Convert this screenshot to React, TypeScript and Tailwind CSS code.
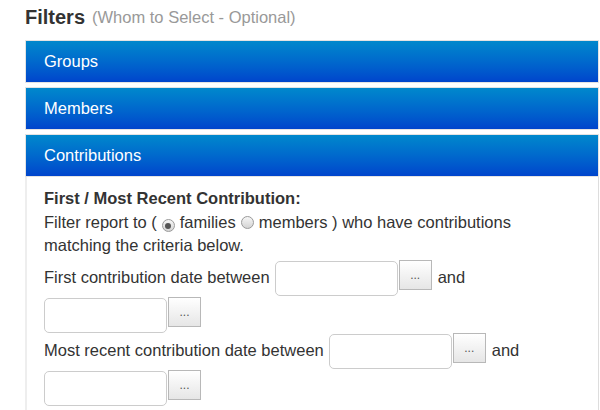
const Bar = ({ label }: { label: string }) => (
    <div className="h-[43px] mb-[4px] flex items-center pl-[18px] text-white text-[16.5px] bg-gradient-to-b from-[#0088cc] to-[#0044cc] border border-[#e3e3e3]">
        {label}
    </div>
)

const DateField = () => (
    <>
        <input type="text" className="w-[123px] h-[35px] bg-white border border-[#cccccc] rounded-[5px] outline-none" />
        <button className="w-[33px] h-[30px] -mt-[1px] ml-[1px] border border-[#b8b8b8] bg-gradient-to-b from-white to-[#e6e6e6] text-[#555] text-[12px] leading-none">...</button>
    </>
)

const Radio = ({ checked }: { checked?: boolean }) => (
    <span className="inline-flex items-center justify-center w-[13px] h-[13px] rounded-full border border-[#9a9a9a] bg-gradient-to-b from-[#f6f6f6] to-[#d4d4d4] mx-[5px] align-[-1px]">
        {checked && <span className="w-[6px] h-[6px] rounded-full bg-[#555]" />}
    </span>
)

export default function App() {
    return (
        <div className="font-['Liberation_Sans',Arial,sans-serif] text-[#333] w-[600px] h-[410px] overflow-hidden bg-white pl-[25px] pr-[1px]">
            <div className="h-[40px] flex items-center pb-[6px]">
                <span className="text-[20px] font-bold text-[#333]">Filters</span>
                <span className="text-[16.5px] text-[#999] ml-[7px] mt-[1px]">(Whom to Select - Optional)</span>
            </div>
            <Bar label="Groups" />
            <Bar label="Members" />
            <div className="h-[43px] flex items-center pl-[18px] text-white text-[16.5px] bg-gradient-to-b from-[#0088cc] to-[#0044cc] border border-[#e3e3e3]">
                Contributions
            </div>
            <div className="border-l-2 border-l-[#eeeeee] border-r border-r-[#dddddd] pl-[17px] pt-[10px] h-[300px] text-[16.5px] leading-[23.5px]">
                <div className="font-bold">First / Most Recent Contribution:</div>
                <div>
                    Filter report to (<Radio checked />families<Radio />members ) who have contributions
                    <br />
                    matching the criteria below.
                </div>
                <div className="flex items-start mt-[3px]">
                    <span className="self-center mr-[5px]">First contribution date between</span>
                    <DateField />
                    <span className="self-center ml-[6px]">and</span>
                </div>
                <div className="flex items-start mt-[2px]">
                    <DateField />
                </div>
                <div className="flex items-start mt-[1px]">
                    <span className="self-center mr-[5px]">Most recent contribution date between</span>
                    <DateField />
                    <span className="self-center ml-[6px]">and</span>
                </div>
                <div className="flex items-start mt-[2px]">
                    <DateField />
                </div>
            </div>
        </div>
    )
}
